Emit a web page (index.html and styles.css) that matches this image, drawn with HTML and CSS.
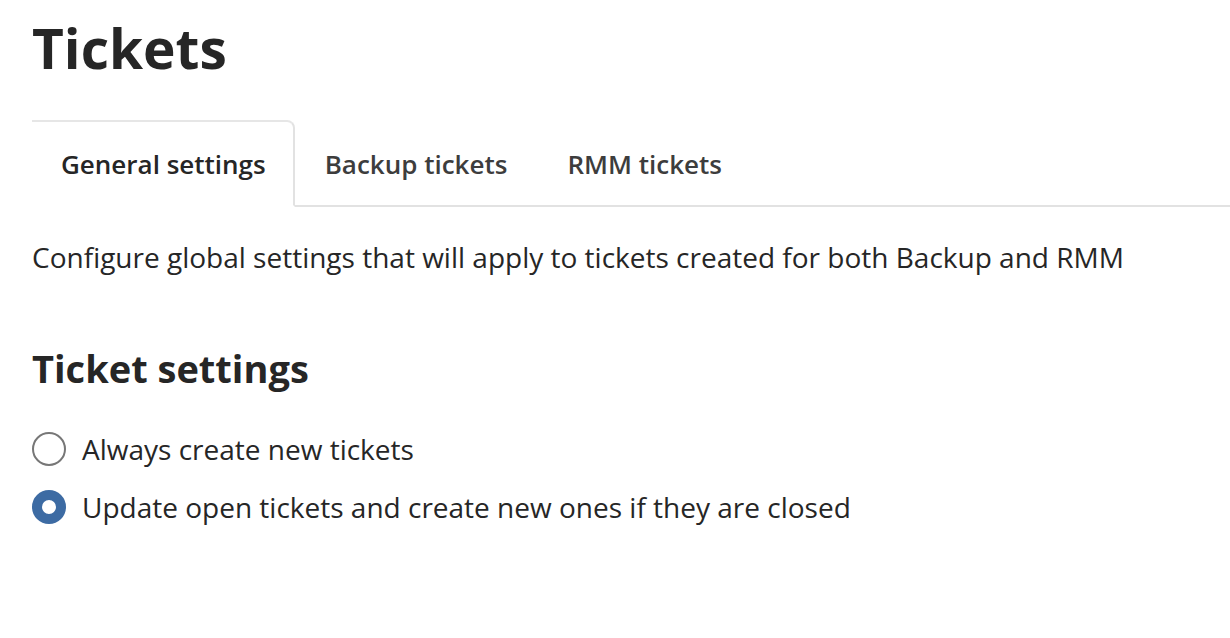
FILE: index.html
```html
<!DOCTYPE html>
<html>
<head>
<meta charset="utf-8">
<link rel="stylesheet" href="styles.css">
</head>
<body>
<div class="page">
  <h1 class="title">Tickets</h1>
  <div class="tabs">
    <div class="tab active">General settings</div>
    <div class="tab">Backup tickets</div>
    <div class="tab">RMM tickets</div>
    <div class="tab-fill"></div>
  </div>
  <p class="desc">Configure global settings that will apply to tickets created for both Backup and RMM</p>
  <h2 class="section">Ticket settings</h2>
  <div class="options">
    <label class="option"><span class="radio"></span><span>Always create new tickets</span></label>
    <label class="option"><span class="radio checked"></span><span>Update open tickets and create new ones if they are closed</span></label>
  </div>
</div>
</body>
</html>
```

FILE: styles.css
```css
html, body {
  margin: 0;
  padding: 0;
  background: #fff;
}
body {
  font-family: "Open Sans", "Liberation Sans", sans-serif;
  color: #262626;
}
.page {
  padding: 0 0 0 32px;
}
.title {
  margin: 0;
  padding-top: 12px;
  font-size: 55px;
  line-height: 72px;
  font-weight: 700;
  color: #262626;
}
.tabs {
  display: flex;
  margin-top: 36px;
  height: 87px;
}
.tab {
  box-sizing: border-box;
  display: flex;
  align-items: center;
  padding: 2px 30px 0;
  font-size: 26px;
  font-weight: 600;
  color: #3d3d3d;
  border-bottom: 2px solid #e2e2e2;
}
.tab.active {
  padding: 0 27px 0 29px;
  color: #262626;
  border-top: 2px solid #e6e6e6;
  border-right: 2px solid #e2e2e2;
  border-bottom-color: transparent;
  border-radius: 0 8px 0 0;
}
.tab-fill {
  flex: 1;
  border-bottom: 2px solid #e2e2e2;
}
.desc {
  margin: 31px 0 0;
  font-size: 28px;
  line-height: 38px;
  color: #262626;
}
.section {
  margin: 67px 0 0;
  font-size: 38px;
  line-height: 50px;
  font-weight: 700;
}
.options {
  margin-top: 37px;
  display: flex;
  flex-direction: column;
  gap: 20px;
}
.option {
  display: flex;
  align-items: center;
  gap: 16px;
  font-size: 28px;
  line-height: 38px;
}
.radio {
  box-sizing: border-box;
  width: 34px;
  height: 34px;
  border-radius: 50%;
  border: 2px solid #777;
  flex: none;
}
.radio.checked {
  border: 10px solid #3d6ba3;
}
```
